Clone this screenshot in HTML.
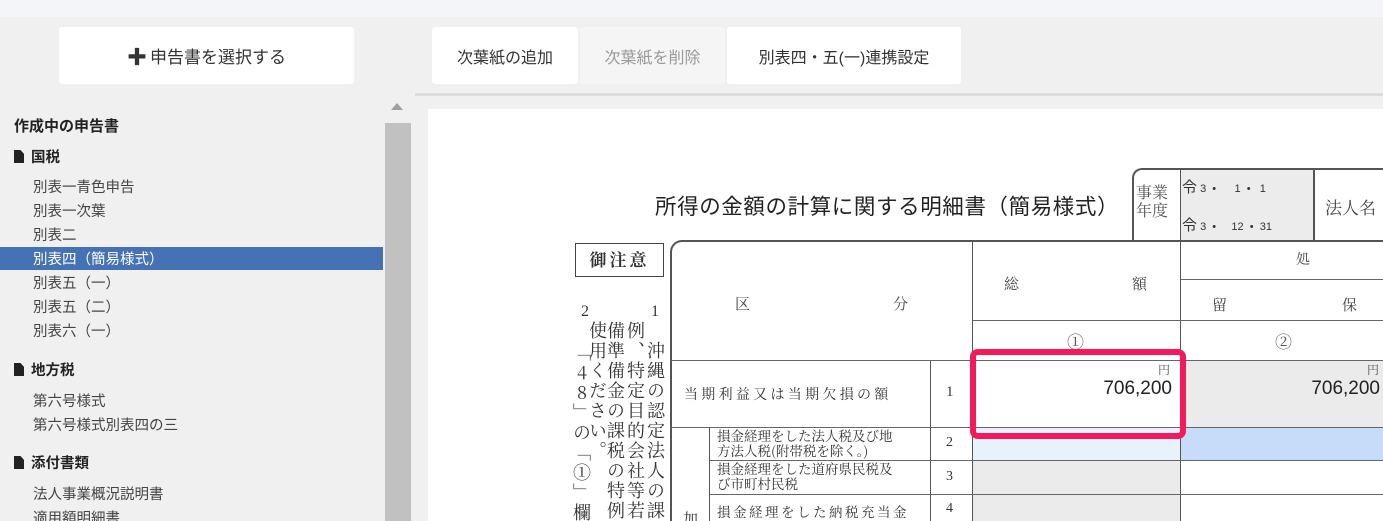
<!DOCTYPE html>
<html><head><meta charset="utf-8">
<style>
*{margin:0;padding:0;box-sizing:border-box}
html{overflow:hidden;width:1383px;height:521px}
body{width:1383px;height:521px;overflow:hidden;background:#f0f0f0;position:relative;font-family:"Liberation Sans","Noto Sans CJK JP",sans-serif;color:#333}
.a{position:absolute}
.btn{position:absolute;background:#fff;border-radius:3px;font-size:16px;display:flex;align-items:center;justify-content:center;color:#333}
.serif{font-family:"Liberation Serif","Noto Serif CJK SC",serif}
.side div{position:absolute;left:33px;font-size:14.5px;color:#444}
.hd{position:absolute;left:14px;font-size:14.5px;font-weight:bold;color:#222}
.ic{display:inline-block;width:10px;height:13px;background:#222;margin-right:7px;vertical-align:-1px;clip-path:polygon(0 0,65% 0,100% 30%,100% 100%,0 100%)}
.vl{position:absolute;background:#555}
.hl{position:absolute;background:#666;height:1px}
.vt{position:absolute;writing-mode:vertical-rl;text-orientation:upright;white-space:nowrap;font-size:18px;line-height:20px;color:#333;font-family:"Noto Serif CJK SC",serif;letter-spacing:2px}
</style></head><body>
<div class="a" style="left:0;top:0;width:1383px;height:17px;background:#f3f5f8"></div>
<div class="btn" style="left:59px;top:27px;width:295px;height:57px;font-size:17px"><b style="font-size:20px;margin-right:3px">✚</b>申告書を選択する</div>
<div class="btn" style="left:432px;top:27px;width:146px;height:57px">次葉紙の追加</div>
<div class="btn" style="left:580px;top:27px;width:145px;height:57px;background:#f5f5f5;color:#999">次葉紙を削除</div>
<div class="btn" style="left:727px;top:27px;width:234px;height:57px">別表四・五(一)連携設定</div>

<div class="hd" style="top:115px;font-size:15px">作成中の申告書</div>
<div class="hd" style="top:146px"><span class="ic"></span>国税</div>
<div class="side">
<div style="top:176px">別表一青色申告</div>
<div style="top:200px">別表一次葉</div>
<div style="top:224px">別表二</div>
<div style="top:247px;left:0;width:383px;height:23px;background:#4472b4"></div>
<div style="top:248px;color:#fff">別表四（簡易様式）</div>
<div style="top:272px">別表五（一）</div>
<div style="top:296px">別表五（二）</div>
<div style="top:320px">別表六（一）</div>
<div style="top:390px">第六号様式</div>
<div style="top:414px">第六号様式別表四の三</div>
<div style="top:483px">法人事業概況説明書</div>
<div style="top:507px">適用額明細書</div>
</div>
<div class="hd" style="top:359px"><span class="ic"></span>地方税</div>
<div class="hd" style="top:452px"><span class="ic"></span>添付書類</div>
<div class="a" style="left:384px;top:94px;width:27px;height:427px;background:#f0f0f0"></div>
<div class="a" style="left:391px;top:103px;width:0;height:0;border-left:6px solid transparent;border-right:6px solid transparent;border-bottom:7px solid #a0a0a0"></div>
<div class="a" style="left:385px;top:123px;width:26px;height:398px;background:#c1c1c1"></div>

<div class="a" style="left:415px;top:93px;width:968px;height:3px;background:#dcdcdc"></div>
<div class="a" style="left:428px;top:109px;width:955px;height:412px;background:#fff"></div>

<div class="a" style="left:655px;top:190px;font-size:21.5px;letter-spacing:0.6px;color:#222;font-family:'Noto Sans CJK JP',sans-serif;white-space:nowrap">所得の金額の計算に関する明細書（簡易様式）</div>

<div class="a" style="left:1132px;top:168px;width:260px;height:74px;border:2px solid #555;border-right:none;border-radius:10px 0 0 0"></div>
<div class="a" style="left:1181px;top:170px;width:132px;height:71px;background:#ececec"></div>
<div class="vl" style="left:1180px;top:169px;width:1px;height:72px"></div>
<div class="vl" style="left:1313px;top:169px;width:2px;height:72px"></div>
<div class="a" style="left:1136px;top:183px;font-size:16px;line-height:18px;color:#555;font-family:'Noto Serif CJK SC',serif">事業<br>年度</div>
<div class="a" style="left:1182px;top:176px;font-size:15px;color:#333;white-space:pre">令<span style="font-size:11px"> 3  •      1  •   1</span></div>
<div class="a" style="left:1182px;top:214px;font-size:15px;color:#333;white-space:pre">令<span style="font-size:11px"> 3  •     12  •  31</span></div>
<div class="a" style="left:1325px;top:194px;font-size:17px;color:#444;font-family:'Noto Serif CJK SC',serif">法人名</div>

<div class="a" style="left:575px;top:243px;width:89px;height:34px;border:1.5px solid #444;font-size:17px;font-weight:bold;text-align:center;line-height:30px;font-family:'Noto Serif CJK SC',serif;letter-spacing:3px">御注意</div>
<div class="a serif" style="left:581px;top:303px;font-size:16px">2</div>
<div class="a serif" style="left:651px;top:303px;font-size:16px">1</div>
<div style="position:absolute;left:428px;top:109px;width:955px;height:412px;overflow:hidden">
<div class="vt" style="left:218px;top:232px">沖縄の認定法人の課税の</div>
<div class="vt" style="left:198px;top:212px">例、特定目的会社等若しくは</div>
<div class="vt" style="left:178px;top:212px">備準備金の課税の特例、再</div>
<div class="vt" style="left:160px;top:212px">使用ください。</div>
<div class="vt" style="left:144px;top:234px">「48」の「①」欄の金額</div>
</div>

<div class="a" style="left:670px;top:240px;width:720px;height:281px;border-top:2px solid #555;border-left:2px solid #555;border-radius:12px 0 0 0"></div>
<div class="a" style="left:1183px;top:361px;width:200px;height:66px;background:#ebebeb"></div>
<div class="a" style="left:973px;top:428px;width:207px;height:32px;background:#e8f2fd"></div>
<div class="a" style="left:1181px;top:428px;width:202px;height:32px;background:#c6dcf8"></div>
<div class="a" style="left:973px;top:461px;width:207px;height:60px;background:#ebebeb"></div>

<div class="vl" style="left:972px;top:241px;width:1px;height:280px"></div>
<div class="vl" style="left:1180px;top:241px;width:1px;height:280px"></div>
<div class="vl" style="left:930px;top:360px;width:1px;height:161px"></div>
<div class="vl" style="left:709px;top:427px;width:1px;height:94px"></div>
<div class="hl" style="left:973px;top:320px;width:410px"></div>
<div class="hl" style="left:1181px;top:279px;width:202px"></div>
<div class="hl" style="left:671px;top:360px;width:712px"></div>
<div class="hl" style="left:671px;top:427px;width:712px"></div>
<div class="hl" style="left:710px;top:460px;width:673px"></div>
<div class="hl" style="left:710px;top:494px;width:673px"></div>

<div class="a serif" style="left:735px;top:293px;font-size:15px;color:#444">区</div>
<div class="a serif" style="left:893px;top:293px;font-size:15px;color:#444">分</div>
<div class="a serif" style="left:1004px;top:273px;font-size:15px;color:#444">総</div>
<div class="a serif" style="left:1132px;top:273px;font-size:15px;color:#444">額</div>
<div class="a serif" style="left:1296px;top:249px;font-size:14px;color:#444">処</div>
<div class="a serif" style="left:1212px;top:294px;font-size:15px;color:#444">留</div>
<div class="a serif" style="left:1342px;top:294px;font-size:15px;color:#444">保</div>
<div class="a serif" style="left:1067px;top:328px;font-size:17px;color:#555">①</div>
<div class="a serif" style="left:1275px;top:328px;font-size:17px;color:#555">②</div>

<div class="a" style="left:684px;top:384px;font-size:14px;color:#333;letter-spacing:3.3px;font-family:'Noto Serif CJK SC',serif">当期利益又は当期欠損の額</div>
<div class="a serif" style="left:946px;top:384px;font-size:15px">1</div>
<div class="a" style="left:717px;top:428px;font-size:13.5px;line-height:15px;color:#333;font-family:'Noto Serif CJK SC',serif">損金経理をした法人税及び地<br>方法人税(附帯税を除く。)</div>
<div class="a serif" style="left:946px;top:435px;font-size:14px">2</div>
<div class="a" style="left:717px;top:461px;font-size:13.5px;line-height:15px;color:#333;font-family:'Noto Serif CJK SC',serif">損金経理をした道府県民税及<br>び市町村民税</div>
<div class="a serif" style="left:946px;top:469px;font-size:14px">3</div>
<div class="a" style="left:717px;top:501px;font-size:13.5px;letter-spacing:2.5px;color:#333;font-family:'Noto Serif CJK SC',serif">損金経理をした納税充当金</div>
<div class="a serif" style="left:946px;top:501px;font-size:14px">4</div>
<div class="a serif" style="left:683px;top:508px;font-size:15px">加</div>

<div class="a serif" style="left:1158px;top:361px;font-size:12px;color:#555">円</div>
<div class="a" style="left:1060px;top:378px;width:112px;text-align:right;font-size:19px;color:#222">706,200</div>
<div class="a serif" style="left:1367px;top:361px;font-size:12px;color:#555">円</div>
<div class="a" style="left:1270px;top:378px;width:110px;text-align:right;font-size:19px;color:#222">706,200</div>

<div class="a" style="left:970px;top:349px;width:216px;height:90px;border:6px solid #f5185a;border-radius:8px"></div>
</body></html>
